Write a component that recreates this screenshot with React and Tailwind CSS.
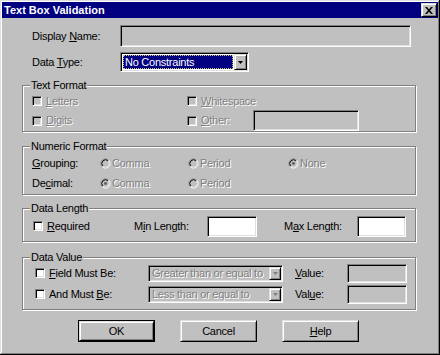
const font = "font-['Liberation_Sans',Arial,sans-serif]"
const sunken =
  "border border-t-[#808080] border-l-[#808080] border-r-white border-b-white shadow-[inset_1px_1px_0_#000,inset_-1px_-1px_0_#dfdfdf]"
const raised =
  "border border-t-[#dfdfdf] border-l-[#dfdfdf] border-r-black border-b-black shadow-[inset_1px_1px_0_#fff,inset_-1px_-1px_0_#808080]"
const dim = "text-[#808080] [text-shadow:1px_1px_0_#fff]"

function Check({ disabled }) {
  return <span className={`block w-[10px] h-[10px] shrink-0 ${sunken} ${disabled ? "bg-[#c0c0c0]" : "bg-white"}`} />
}

function Radio({ checked }) {
  return (
    <svg width="11" height="11" viewBox="0 0 12 12" className="shrink-0">
      <circle cx="6" cy="6" r="4.5" fill="#c0c0c0" />
      <path d="M2.46 9.54A5 5 0 0 1 9.54 2.46" stroke="#808080" fill="none" />
      <path d="M9.54 2.46A5 5 0 0 1 2.46 9.54" stroke="#fff" fill="none" />
      <path d="M3.17 8.83A4 4 0 0 1 8.83 3.17" stroke="#000" fill="none" />
      <path d="M8.83 3.17A4 4 0 0 1 3.17 8.83" stroke="#dfdfdf" fill="none" />
      {checked && <circle cx="6" cy="6" r="1.6" fill="#606060" />}
    </svg>
  )
}

function Opt({ w = "", disabled, label }) {
  return (
    <div className={`flex items-center gap-[4px] ${w}`}>
      <Check disabled={disabled} />
      <span className={disabled ? dim : ""}>{label}</span>
    </div>
  )
}

function RadioOpt({ w = "", checked, label }) {
  return (
    <div className={`flex items-center gap-[1px] ${w}`}>
      <Radio checked={checked} />
      <span className={dim}>{label}</span>
    </div>
  )
}

function Arrow({ color = "#000" }) {
  return (
    <svg width="5" height="3" viewBox="0 0 5 3">
      <path d="M0 0h5L2.5 3z" fill={color} />
    </svg>
  )
}

function Group({ title, className = "", children }) {
  return (
    <fieldset
      className={`ml-[20px] w-[394px] border border-[#808080] shadow-[1px_1px_0_#fff,inset_1px_1px_0_#fff] ${className}`}
    >
      <legend className="ml-[7px] px-[1px] leading-[13px] bg-[#c0c0c0]">{title}</legend>
      {children}
    </fieldset>
  )
}

function DimSelect({ text }) {
  return (
    <div className={`w-[135px] h-[17px] flex p-[1px] ${sunken}`}>
      <span className={`flex-1 pl-[2px] leading-[13px] whitespace-nowrap overflow-hidden ${dim}`}>{text}</span>
      <div className={`w-[12px] h-full flex items-center justify-center ${raised}`}>
        <Arrow color="#808080" />
      </div>
    </div>
  )
}

function Btn({ children, primary }) {
  const inner = (
    <div className={`w-full h-full flex items-center justify-center ${raised}`}>{children}</div>
  )
  return primary ? (
    <div className="w-[77px] h-[22px] border border-black">{inner}</div>
  ) : (
    <div className="w-[77px] h-[22px]">{inner}</div>
  )
}

export default function App() {
  return (
    <div
      className={`w-[440px] h-[355px] bg-[#c0c0c0] p-[2px] text-[11px] leading-[13px] tracking-[-0.25px] text-black ${font} shadow-[inset_-1px_-1px_0_#000,inset_1px_1px_0_#dfdfdf,inset_-2px_-2px_0_#808080,inset_2px_2px_0_#fff]`}
    >
      <div className="h-[16px] bg-[#000080] flex items-center justify-between pl-[2px] pr-[1px]">
        <span className="font-bold text-white tracking-normal">Text Box Validation</span>
        <div className={`w-[16px] h-[14px] bg-[#c0c0c0] flex items-center justify-center ${raised}`}>
          <svg width="8" height="7" viewBox="0 0 8 7">
            <path d="M0 0h2l2 2.2L6 0h2L5 3.5 8 7H6L4 4.8 2 7H0l3-3.5z" fill="#000" />
          </svg>
        </div>
      </div>

      <div className="mt-[7px] flex items-center h-[22px]">
        <span className="w-[118px] pl-[30px]">
          Display <u>N</u>ame:
        </span>
        <div className={`w-[291px] h-[22px] ${sunken}`} />
      </div>

      <div className="mt-[5px] flex items-center h-[20px]">
        <span className="w-[118px] pl-[30px]">
          Data <u>T</u>ype:
        </span>
        <div className={`w-[129px] h-[20px] bg-white flex p-[1px] ${sunken}`}>
          <div className="flex-1 m-[1px] bg-[#000080] border border-dotted border-[#c8c878] flex items-center">
            <span className="text-white pl-[1px]">No Constraints</span>
          </div>
          <div className={`w-[13px] h-full bg-[#c0c0c0] flex items-center justify-center ${raised}`}>
            <Arrow />
          </div>
        </div>
      </div>

      <Group title="Text Format" className="mt-[7px]">
        <div className="flex items-center h-[18px] pl-[9px]">
          <Opt w="w-[155px]" disabled label={<><u>L</u>etters</>} />
          <Opt disabled label={<><u>W</u>hitespace</>} />
        </div>
        <div className="flex items-center h-[21px] pl-[9px]">
          <Opt w="w-[155px]" disabled label={<><u>D</u>igits</>} />
          <Opt w="w-[66px]" disabled label={<><u>O</u>ther:</>} />
          <div className={`w-[106px] h-[21px] ${sunken}`} />
        </div>
      </Group>

      <Group title="Numeric Format" className="mt-[8px] pb-[1px]">
        <div className="flex items-center h-[20px] pl-[9px]">
          <span className="w-[68px]">
            <u>G</u>rouping:
          </span>
          <RadioOpt w="w-[88px]" label="Comma" />
          <RadioOpt w="w-[100px]" label="Period" />
          <RadioOpt checked label="None" />
        </div>
        <div className="flex items-center h-[20px] pl-[9px]">
          <span className="w-[68px]">
            De<u>c</u>imal:
          </span>
          <RadioOpt w="w-[88px]" checked label="Comma" />
          <RadioOpt w="w-[100px]" label="Period" />
        </div>
      </Group>

      <Group title="Data Length" className="mt-[7px] pb-[4px]">
        <div className="flex items-center h-[22px] pl-[10px]">
          <Opt w="w-[101px]" label={<><u>R</u>equired</>} />
          <span className="w-[73px]">
            M<u>i</u>n Length:
          </span>
          <div className={`w-[50px] h-[21px] bg-white ${sunken}`} />
          <span className="w-[73px] ml-[27px]">
            M<u>a</u>x Length:
          </span>
          <div className={`w-[49px] h-[21px] bg-white ${sunken}`} />
        </div>
      </Group>

      <Group title="Data Value" className="mt-[9px] pb-[5px]">
        <div className="flex items-center h-[18px] pl-[12px]">
          <Opt w="w-[113px]" label={<><u>F</u>ield Must Be:</>} />
          <DimSelect text="Greater than or equal to" />
          <span className="w-[52px] ml-[12px]">
            <u>V</u>alue:
          </span>
          <div className={`w-[60px] h-[19px] ${sunken}`} />
        </div>
        <div className="flex items-center h-[20px] mt-[2px] pl-[12px]">
          <Opt w="w-[113px]" label={<>And Must <u>B</u>e:</>} />
          <DimSelect text="Less than or equal to" />
          <span className="w-[52px] ml-[12px]">
            Val<u>u</u>e:
          </span>
          <div className={`w-[60px] h-[19px] ${sunken}`} />
        </div>
      </Group>

      <div className="mt-[10px] flex gap-[25px] pl-[76px]">
        <Btn primary>OK</Btn>
        <Btn>Cancel</Btn>
        <Btn>
          <span>
            <u>H</u>elp
          </span>
        </Btn>
      </div>
    </div>
  )
}
